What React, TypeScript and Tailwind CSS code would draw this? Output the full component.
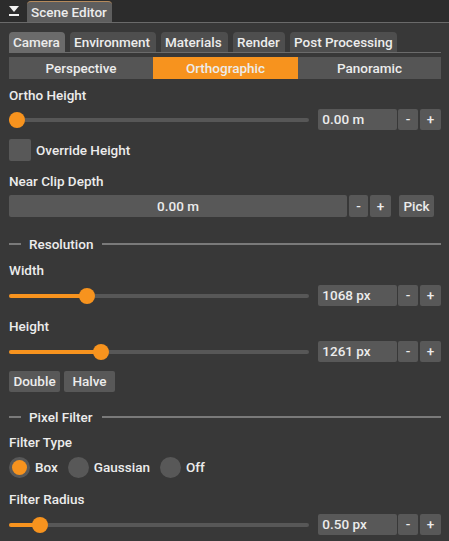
import React from "react";

const font = { fontFamily: "Roboto, 'Liberation Sans', sans-serif" };

function Label({ text, mt }: { text: string; mt: string }) {
  return <div className={`${mt} h-[16px] leading-[17px]`}>{text}</div>;
}

function SliderRow({ pct, value, mt }: { pct: number; value: string; mt: string }) {
  return (
    <div className={`${mt} flex h-[21px] items-center`}>
      <div className="relative h-[4px] w-[301px] rounded-full bg-[#575757]">
        <div className="h-full rounded-full bg-[#f7931e]" style={{ width: `${pct}px` }} />
        <div
          className="absolute top-1/2 h-[16px] w-[16px] -translate-x-1/2 -translate-y-1/2 rounded-full bg-[#f7931e]"
          style={{ left: `${pct}px` }}
        />
      </div>
      <div className="ml-[9px] flex h-full w-[79px] items-center rounded-[2px] bg-[#585858] pl-[4px]">
        {value}
      </div>
      <div className="ml-[1px] flex h-full w-[20px] items-center justify-center rounded-[2px] bg-[#585858]">-</div>
      <div className="ml-[2px] flex h-full w-[21px] items-center justify-center rounded-[2px] bg-[#585858]">+</div>
    </div>
  );
}

function Sep({ text, mt }: { text: string; mt: string }) {
  return (
    <div className={`${mt} flex h-[16px] items-center`}>
      <div className="h-[2px] w-[12px] bg-[#7a7a7a]" />
      <span className="ml-[8px] leading-[16px]">{text}</span>
      <div className="ml-[9px] h-[2px] flex-1 bg-[#7a7a7a]" />
    </div>
  );
}

function Radio({ label, on }: { label: string; on?: boolean }) {
  return (
    <div className="flex items-center">
      <div className="flex h-[21px] w-[21px] items-center justify-center rounded-full bg-[#585858]">
        {on && <div className="h-[15px] w-[15px] rounded-full bg-[#f7931e]" />}
      </div>
      <span className="ml-[5px]">{label}</span>
    </div>
  );
}

const tabs = [
  { t: "Camera", w: "w-[56px]", on: true },
  { t: "Environment", w: "w-[86px]" },
  { t: "Materials", w: "w-[67px]" },
  { t: "Render", w: "w-[52px]" },
  { t: "Post Processing", w: "w-[107px]" },
];

export default function App() {
  return (
    <div
      className="h-[541px] w-[449px] overflow-hidden bg-[#383838] text-[13.5px] font-medium text-[#ececec]"
      style={font}
    >
      {/* title bar */}
      <div className="flex h-[22px] items-end bg-[#2c2c2c]">
        <div className="flex h-full w-[27px] items-center justify-center">
          <svg width="12" height="12" viewBox="0 0 12 12">
            <polygon points="1,1 11,1 6,7" fill="#f2f2f2" />
            <rect x="1" y="9" width="10" height="2" fill="#f2f2f2" />
          </svg>
        </div>
        <div className="flex h-[21px] w-[85px] items-center rounded-t-[4px] border-t border-[#b58a5c] bg-[#5e5e5e] pl-[4px]">
          Scene Editor
        </div>
      </div>
      <div className="h-px bg-[#6a6a6a]" />

      <div className="pl-[9px] pr-[8px]">
        {/* tabs */}
        <div className="mt-[9px] flex h-[20px] gap-[5px]">
          {tabs.map((x) => (
            <div
              key={x.t}
              className={`${x.w} flex items-center rounded-t-[4px] pl-[4px] ${
                x.on ? "bg-[#6b6b6b]" : "bg-[#4e4e4e]"
              }`}
            >
              {x.t}
            </div>
          ))}
        </div>
        <div className="h-px bg-[#6b6b6b]" />

        {/* projection */}
        <div className="mt-[4px] flex h-[22px]">
          <div className="flex w-[144px] items-center justify-center bg-[#555555]">Perspective</div>
          <div className="flex w-[145px] items-center justify-center bg-[#f7931e]">Orthographic</div>
          <div className="flex flex-1 items-center justify-center bg-[#555555]">Panoramic</div>
        </div>

        <Label text="Ortho Height" mt="mt-[8px]" />
        <SliderRow pct={8} value="0.00 m" mt="mt-[6px]" />

        <div className="mt-[9px] flex h-[22px] items-center">
          <div className="h-[22px] w-[22px] rounded-[2px] bg-[#585858]" />
          <span className="ml-[5px]">Override Height</span>
        </div>

        <Label text="Near Clip Depth" mt="mt-[12px]" />
        <div className="mt-[6px] flex h-[22px] items-center">
          <div className="flex h-full w-[338px] items-center justify-center rounded-[2px] bg-[#585858]">
            0.00 m
          </div>
          <div className="ml-[2px] flex h-full w-[19px] items-center justify-center rounded-[2px] bg-[#585858]">-</div>
          <div className="ml-[2px] flex h-full w-[21px] items-center justify-center rounded-[2px] bg-[#585858]">+</div>
          <div className="ml-[8px] flex h-full w-[35px] items-center justify-center rounded-[2px] bg-[#585858]">Pick</div>
        </div>

        <Sep text="Resolution" mt="mt-[19px]" />
        <Label text="Width" mt="mt-[10px]" />
        <SliderRow pct={78} value="1068 px" mt="mt-[7px]" />
        <Label text="Height" mt="mt-[12px]" />
        <SliderRow pct={92} value="1261 px" mt="mt-[7px]" />

        <div className="mt-[9px] flex h-[21px] gap-[4px]">
          <div className="flex w-[51px] items-center justify-center rounded-[2px] bg-[#585858]">Double</div>
          <div className="flex w-[51px] items-center justify-center rounded-[2px] bg-[#585858]">Halve</div>
        </div>

        <Sep text="Pixel Filter" mt="mt-[17px]" />
        <Label text="Filter Type" mt="mt-[9px]" />
        <div className="mt-[7px] flex h-[21px] items-center gap-[10px]">
          <Radio label="Box" on />
          <Radio label="Gaussian" />
          <Radio label="Off" />
        </div>
        <Label text="Filter Radius" mt="mt-[13px]" />
        <SliderRow pct={31} value="0.50 px" mt="mt-[7px]" />
      </div>
    </div>
  );
}
